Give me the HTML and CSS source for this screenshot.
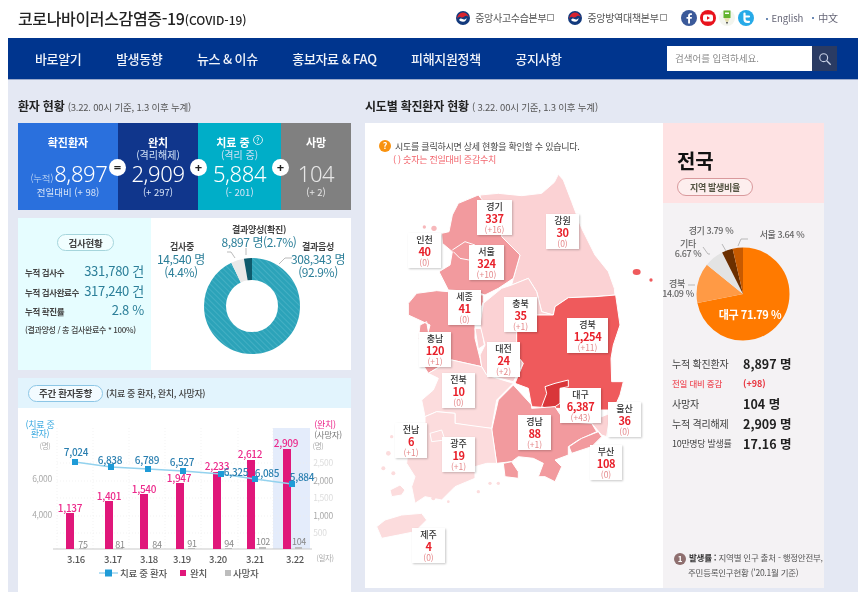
FILE: index.html
```html
<!DOCTYPE html>
<html lang="ko">
<head>
<meta charset="utf-8">
<title>코로나바이러스감염증-19</title>
<link rel="stylesheet" href="styles.css">
</head>
<body>
<header class="top">
  <h1 class="brand">코로나바이러스감염증-19<small>(COVID-19)</small></h1>
  <div class="links">
    <a class="org org-first"><svg class="emblem" viewBox="0 0 16 16"><circle cx="8" cy="8" r="8" fill="#123a7d"/><path d="M1.5 9A6.6 6.6 0 0 1 14.6 7.4C13.5 5.4 11 5 9.6 6.3 8.3 7.6 6.6 8 5.3 7 4 6 2.4 7 1.5 9Z" fill="#d8232f"/><path d="M3.6 10.4C4.2 8.4 6 8.2 7.4 9.2 9 10.2 11.4 9.6 12 7.6 12.4 10 10.6 12.2 8 12.2 6 12.2 4.4 11.6 3.6 10.4Z" fill="#fff"/></svg>중앙사고수습본부<i class="ext"></i></a>
    <a class="org org-second"><svg class="emblem" viewBox="0 0 16 16"><circle cx="8" cy="8" r="8" fill="#123a7d"/><path d="M1.5 9A6.6 6.6 0 0 1 14.6 7.4C13.5 5.4 11 5 9.6 6.3 8.3 7.6 6.6 8 5.3 7 4 6 2.4 7 1.5 9Z" fill="#d8232f"/><path d="M3.6 10.4C4.2 8.4 6 8.2 7.4 9.2 9 10.2 11.4 9.6 12 7.6 12.4 10 10.6 12.2 8 12.2 6 12.2 4.4 11.6 3.6 10.4Z" fill="#fff"/></svg>중앙방역대책본부<i class="ext"></i></a>
    <div class="social">
      <svg class="sns" viewBox="0 0 16 16"><circle cx="8" cy="8" r="8" fill="#3b5a9a"/><path d="M9 13.5V8.8h1.7l.2-1.9H9V5.8c0-.6.2-.9.9-.9h1V3.200h-1.500C8.200 3.200 7.100 4.200 7.100 5.700v1.200H5.500v1.900h1.600v4.700Z" fill="#fff"/></svg>
      <svg class="sns" viewBox="0 0 16 16"><circle cx="8" cy="8" r="8" fill="#e8131d"/><rect x="3" y="4.500" width="10" height="7" rx="2" fill="#fff"/><path d="M7 6.300 10 8 7 9.700Z" fill="#e8131d"/></svg>
      <svg class="sns" viewBox="0 0 16 16"><circle cx="8" cy="8" r="8" fill="#f3f5ee"/><rect x="4.500" y="0.500" width="7" height="7.500" fill="#63b32e"/><rect x="6" y="2.500" width="4" height="1.500" fill="#fff"/><path d="M5 8h6l-2 4H7Z" fill="#e5dfae"/><path d="M7 12h2l-1 2.500Z" fill="#444"/></svg>
      <svg class="sns" viewBox="0 0 16 16"><circle cx="8" cy="8" r="8" fill="#27aae8"/><path d="M6.500 3.500V9c0 2 1 2.800 2.800 2.800H11M6.500 6.500H11" fill="none" stroke="#fff" stroke-width="2.200" stroke-linecap="round"/></svg>
    </div>
    <a class="lang lang-en">English</a>
    <a class="lang lang-cn">中文</a>
  </div>
</header>

<nav class="gnb">
  <ul class="menu">
    <li>바로알기</li>
    <li>발생동향</li>
    <li>뉴스 &amp; 이슈</li>
    <li>홍보자료 &amp; FAQ</li>
    <li>피해지원정책</li>
    <li>공지사항</li>
  </ul>
  <div class="search">
    <span class="search-box">검색어를 입력하세요.</span>
    <span class="search-btn"><svg viewBox="0 0 16 16" width="14" height="14"><circle cx="6.500" cy="6.500" r="4.500" fill="none" stroke="#c9d2e6" stroke-width="1.300"/><path d="M10 10l4.500 4.500" stroke="#c9d2e6" stroke-width="1.500"/></svg></span>
  </div>
</nav>

<main class="page">
  <section class="col-left">
    <h2 class="sec-title">환자 현황 <span>(3.22. 00시 기준, 1.3 이후 누계)</span></h2>

    <div class="stats">
      <div class="cell c-total">
        <b class="t">확진환자</b>
        <div class="num"><small>(누적)</small>8,897</div>
        <div class="chg">전일대비 (+ 98)</div>
      </div>
      <div class="cell c-done">
        <b class="t">완치</b>
        <span class="s">(격리해제)</span>
        <div class="num">2,909</div>
        <div class="chg">(+ 297)</div>
      </div>
      <div class="cell c-care">
        <b class="t">치료 중 <i class="q">?</i></b>
        <span class="s">(격리 중)</span>
        <div class="num">5,884</div>
        <div class="chg">(- 201)</div>
      </div>
      <div class="cell c-dead">
        <b class="t">사망</b>
        <div class="num">104</div>
        <div class="chg">(+ 2)</div>
      </div>
      <span class="op op-1">=</span>
      <span class="op op-2">+</span>
      <span class="op op-3">+</span>
    </div>

    <div class="tests">
      <div class="tests-info">
        <div class="pill pill-test">검사현황</div>
        <dl class="tests-list">
          <div><dt>누적 검사수</dt><dd>331,780 건</dd></div>
          <div><dt>누적 검사완료수</dt><dd>317,240 건</dd></div>
          <div><dt>누적 확진률</dt><dd>2.8 %</dd></div>
        </dl>
        <p class="tests-note">(결과양성 / 총 검사완료수 * 100%)</p>
      </div>
      <svg class="donut" viewBox="151 218 200 152">
        <defs>
          <pattern id="hatch" width="4" height="4" patternUnits="userSpaceOnUse" patternTransform="rotate(45)">
            <rect width="4" height="4" fill="#2ca3b9"/>
            <rect width="1" height="4" fill="#44afc3"/>
          </pattern>
        </defs>
        <g transform="rotate(-90 252 306)" fill="none" stroke-width="22">
          <circle cx="252" cy="306" r="37" pathLength="100" stroke="url(#hatch)" stroke-dasharray="92.9 7.1"/>
          <circle cx="252" cy="306" r="37" pathLength="100" stroke="#e9e9e9" stroke-dasharray="4.4 95.6" stroke-dashoffset="-92.9"/>
          <circle cx="252" cy="306" r="37" pathLength="100" stroke="#0e5a6c" stroke-dasharray="2.7 97.3" stroke-dashoffset="-97.3"/>
        </g>
        <path class="lead" d="M227 252h4l4 6M246 248v7M279 264l6-6h7"/>
        <text class="d-h" x="259" y="233">결과양성(확진)</text>
        <text class="d-v" x="259" y="247">8,897 명(2.7%)</text>
        <text class="d-h" x="182" y="250">검사중</text>
        <text class="d-v" x="181" y="264">14,540 명</text>
        <text class="d-v" x="181" y="277">(4.4%)</text>
        <text class="d-h" x="318" y="250">결과음성</text>
        <text class="d-v" x="318" y="264">308,343 명</text>
        <text class="d-v" x="318" y="277">(92.9%)</text>
      </svg>
    </div>

    <div class="weekly">
      <div class="weekly-head">
        <div class="pill pill-week">주간 환자동향</div>
        <span class="weekly-sub">(치료 중 환자, 완치, 사망자)</span>
      </div>
      <svg class="chart" viewBox="18 408 333 184">
        <rect x="273" y="428" width="37" height="121" fill="#e4ecfb"/>
        <path class="grid" d="M57 428V549M93 428V549M129 428V549M165 428V549M201 428V549M238 428V549M273 428V549"/>
        <path class="grid" d="M57 463H310M57 481H310M57 498H310M57 516H310M57 533H310"/>
        <path d="M53 549H312" stroke="#c9c9c9" stroke-width="1"/>
        <g fill="#e0177a">
          <rect x="66" y="513" width="8" height="36"/>
          <rect x="105" y="501" width="8" height="48"/>
          <rect x="140" y="494" width="8" height="55"/>
          <rect x="176" y="483" width="8" height="66"/>
          <rect x="213" y="472" width="8" height="77"/>
          <rect x="247" y="460" width="8" height="89"/>
          <rect x="283" y="449" width="8" height="100"/>
        </g>
        <g fill="#bdbdbd">
          <rect x="79" y="548" width="7" height="1"/>
          <rect x="116" y="548" width="7" height="1"/>
          <rect x="153" y="548" width="7" height="1"/>
          <rect x="188" y="548" width="7" height="1"/>
          <rect x="225" y="548" width="7" height="1"/>
          <rect x="259" y="547" width="7" height="2"/>
          <rect x="295" y="547" width="7" height="2"/>
        </g>
        <polyline points="75,462 111,467 148,469 183,471 221,474 255,479 292,484" fill="none" stroke="#93d2ee" stroke-width="1.500"/>
        <g fill="#1f9bd7">
          <rect x="72" y="459" width="6" height="6"/>
          <rect x="108" y="464" width="6" height="6"/>
          <rect x="145" y="466" width="6" height="6"/>
          <rect x="180" y="468" width="6" height="6"/>
          <rect x="218" y="471" width="6" height="6"/>
          <rect x="252" y="476" width="6" height="6"/>
          <rect x="289" y="481" width="6" height="6"/>
        </g>
        <g class="v-pink">
          <text x="70" y="512">1,137</text><text x="109" y="500">1,401</text><text x="144" y="493">1,540</text>
          <text x="179" y="482">1,947</text><text x="217" y="470">2,233</text><text x="250" y="458">2,612</text><text x="286" y="447">2,909</text>
        </g>
        <g class="v-blue">
          <text x="76" y="456">7,024</text><text x="110" y="464">6,838</text><text x="147" y="464">6,789</text>
          <text x="182" y="466">6,527</text><text x="236" y="476">6,325</text><text x="267" y="477">6,085</text><text x="302" y="481">5,884</text>
        </g>
        <g class="v-grey">
          <text x="83" y="548">75</text><text x="120" y="548">81</text><text x="157" y="548">84</text>
          <text x="192" y="547">91</text><text x="229" y="547">94</text><text x="263" y="545">102</text><text x="299" y="545">104</text>
        </g>
        <g class="v-date">
          <text x="76" y="563">3.16</text><text x="113" y="563">3.17</text><text x="149" y="563">3.18</text><text x="182" y="563">3.19</text>
          <text x="218" y="563">3.20</text><text x="255" y="563">3.21</text><text x="295" y="563">3.22</text>
        </g>
        <text class="ax-unit" x="325" y="561">(일자)</text>
        <text class="ax-cy" x="40" y="428">(치료 중</text>
        <text class="ax-cy" x="40" y="437">환자)</text>
        <text class="ax-unit" x="45" y="449">(명)</text>
        <text class="ax-l" x="42" y="482">6,000</text>
        <text class="ax-l" x="42" y="518">4,000</text>
        <text class="ax-pk" x="325" y="428">(완치)</text>
        <text class="ax-gr" x="328" y="438">(사망자)</text>
        <text class="ax-unit" x="318" y="449">(명)</text>
        <text class="ax-r" x="323" y="466">2,500</text>
        <text class="ax-l" x="323" y="484">2,000</text>
        <text class="ax-r" x="323" y="501">1,500</text>
        <text class="ax-l" x="323" y="519">1,000</text>
        <text class="ax-r" x="320" y="536">500</text>
        <path d="M99 573H118" stroke="#6fc0e8" stroke-width="1"/>
        <rect x="105" y="569.500" width="7" height="7" fill="#1f9bd7"/>
        <text class="lg" x="120" y="577">치료 중 환자</text>
        <rect x="180" y="570" width="6" height="6" fill="#e0177a"/>
        <text class="lg" x="190" y="577">완치</text>
        <rect x="225" y="570" width="6" height="6" fill="#bdbdbd"/>
        <text class="lg" x="233" y="577">사망자</text>
      </svg>
    </div>
  </section>

  <section class="col-right">
    <h2 class="sec-title">시도별 확진환자 현황 <span>( 3.22. 00시 기준, 1.3 이후 누계)</span></h2>
    <div class="board">
      <div class="map">
        <svg class="map-svg" viewBox="0 -6 894 1395">
          <g stroke="#fff" stroke-width="3" stroke-linejoin="round">
            <path fill="#fbd2d4" d="M345 210L400 205 470 212 530 205 568 172 580 148 595 165 620 230 650 310 690 390 730 440 748 490 750 510 690 515 610 518 570 545 565 570 530 560 515 500 490 460 440 480 445 460 465 390 410 335 410 285 350 240Z"/>
            <path fill="#f29a9e" d="M340 210L360 235 410 290 410 335 465 390 445 460 400 490 360 510 330 500 250 495 222 440 255 420 262 380 232 355 230 325 252 320 262 270 280 235Z"/>
            <path fill="#f29a9e" d="M130 535L155 505 215 497 250 500 355 510 355 530 330 600 330 640 345 700 350 725 260 705 215 730 190 745 165 705 190 680 160 640 165 600 185 590 190 620 195 600 130 570Z"/>
            <path fill="#fbd2d4" d="M330 610L350 610 358 660 340 672Z"/>
            <path fill="#fbd2d4" d="M355 535L410 490 440 480 490 460 515 500 530 560 565 570 515 570 455 620 455 690 475 715 445 770 365 750 350 725 345 690 360 660 345 600Z"/>
            <path fill="#ef5a5c" d="M565 570L570 545 610 518 690 515 752 510 765 600 745 660 738 700 740 770 775 770 765 810 745 855 710 855 575 850 500 845 490 790 450 775 475 715 455 690 455 620 515 570Z"/>
            <path fill="#d9363a" d="M530 845L545 805 540 785 570 775 610 765 610 785 585 790 585 835 570 845 545 850Z"/>
            <path fill="#f29a9e" d="M445 780L500 840 500 850 570 845 600 890 680 895 695 920 640 945 610 965 610 990 570 1005 590 1025 570 1070 540 1055 520 1055 535 1015 505 1000 460 995 440 1010 395 1015 380 915 400 825Z"/>
            <path fill="#f29a9e" d="M415 1015L440 1010 460 1040 460 1060 420 1055Z"/>
            <path fill="#f29a9e" d="M612 965L650 940 700 920 710 935 680 965 620 985Z"/>
            <path fill="#fbd2d4" d="M680 895L710 875 735 865 725 935 710 930Z"/>
            <path fill="#fcdcdd" d="M190 745L260 705 350 725 365 750 445 775 395 825 380 910 330 905 270 895 270 865 215 860 180 875 170 825 205 795 220 760Z"/>
            <path fill="#fcdcdd" d="M180 875L215 860 270 865 270 895 380 910 395 1015 365 1015 330 1025 330 1060 270 1085 230 1125 180 1115 150 1135 140 1085 150 1055 125 1015 130 965 180 935Z"/>
            <path fill="#fcdcdd" d="M195 925L230 915 240 945 200 950Z"/>
            <path fill="#fcdcdd" d="M35 1205L60 1185 110 1170 170 1165 185 1185 150 1220 100 1230 50 1240Z"/>
            <path fill="#fcdcdd" d="M75 1095L105 1080 120 1095 110 1110 80 1115Z"/>
          </g>
          <path d="M262 375L300 350 330 360M265 380L285 400 312 405" fill="none" stroke="#fff" stroke-width="3"/>
          <g fill="#fcdcdd">
            <circle cx="70" cy="985" r="7"/><circle cx="80" cy="935" r="5"/><circle cx="55" cy="1030" r="6"/><circle cx="85" cy="1045" r="6"/><circle cx="375" cy="1075" r="5"/><circle cx="400" cy="1075" r="5"/><circle cx="340" cy="1100" r="5"/><circle cx="205" cy="1120" r="6"/><circle cx="250" cy="1130" r="4"/>
          </g>
          <g fill="#f7b8bb"><circle cx="178" cy="306" r="5"/><circle cx="207" cy="310" r="8"/></g>
          <ellipse cx="815" cy="441" rx="12" ry="9" fill="#ef5a5c"/>
          <circle cx="858" cy="465" r="5" fill="#ef5a5c"/>
        </svg>
        <div class="notice">
          <p class="notice-l1"><i class="notice-q">?</i>시도를 클릭하시면 상세 현황을 확인할 수 있습니다.</p>
          <p class="notice-l2">( ) 숫자는 전일대비 증감수치</p>
        </div>
        <div class="tag tag-gg"><b>경기</b><em>337</em><span>(+16)</span></div>
        <div class="tag tag-gw"><b>강원</b><em>30</em><span>(0)</span></div>
        <div class="tag tag-ic"><b>인천</b><em>40</em><span>(0)</span></div>
        <div class="tag tag-se"><b>서울</b><em>324</em><span>(+10)</span></div>
        <div class="tag tag-sj"><b>세종</b><em>41</em><span>(0)</span></div>
        <div class="tag tag-cb"><b>충북</b><em>35</em><span>(+1)</span></div>
        <div class="tag tag-gb"><b>경북</b><em>1,254</em><span>(+11)</span></div>
        <div class="tag tag-cn"><b>충남</b><em>120</em><span>(+1)</span></div>
        <div class="tag tag-dj"><b>대전</b><em>24</em><span>(+2)</span></div>
        <div class="tag tag-jb"><b>전북</b><em>10</em><span>(0)</span></div>
        <div class="tag tag-dg"><b>대구</b><em>6,387</em><span>(+43)</span></div>
        <div class="tag tag-us"><b>울산</b><em>36</em><span>(0)</span></div>
        <div class="tag tag-jn"><b>전남</b><em>6</em><span>(+1)</span></div>
        <div class="tag tag-gj"><b>광주</b><em>19</em><span>(+1)</span></div>
        <div class="tag tag-gn"><b>경남</b><em>88</em><span>(+1)</span></div>
        <div class="tag tag-bs"><b>부산</b><em>108</em><span>(0)</span></div>
        <div class="tag tag-jj"><b>제주</b><em>4</em><span>(0)</span></div>
      </div>

      <aside class="nation">
        <div class="nation-head">
          <div class="nation-name">전국</div>
          <div class="pill pill-nation">지역 발생비율</div>
        </div>
        <svg class="pie" viewBox="663 203 161 142">
          <g transform="rotate(-90 743 294)" fill="none" stroke-width="46.500">
            <circle cx="743" cy="294" r="23.250" pathLength="100" stroke="#ff7a00" stroke-dasharray="71.79 28.21"/>
            <circle cx="743" cy="294" r="23.250" pathLength="100" stroke="#ff9a45" stroke-dasharray="14.09 85.91" stroke-dashoffset="-71.79"/>
            <circle cx="743" cy="294" r="23.250" pathLength="100" stroke="#e3e3e3" stroke-dasharray="6.67 93.33" stroke-dashoffset="-85.88"/>
            <circle cx="743" cy="294" r="23.250" pathLength="100" stroke="#6b2f00" stroke-dasharray="3.79 96.21" stroke-dashoffset="-92.55"/>
            <circle cx="743" cy="294" r="23.250" pathLength="100" stroke="#c85a00" stroke-dasharray="3.66 96.34" stroke-dashoffset="-96.34"/>
          </g>
          <path class="lead" d="M688 285h7M703 247l5 7 2 0M722 244l4 7M738 246l3-7h7"/>
          <text class="p-l" x="711" y="234">경기 3.79 %</text>
          <text class="p-l" x="782" y="238">서울 3.64 %</text>
          <text class="p-l" x="688" y="247">기타</text>
          <text class="p-l" x="688" y="257">6.67 %</text>
          <text class="p-l" x="677" y="287">경북</text>
          <text class="p-l" x="678" y="297">14.09 %</text>
          <text class="p-big" x="750" y="319">대구 71.79 %</text>
        </svg>
        <dl class="nation-list">
          <div><dt>누적 확진환자</dt><dd>8,897 명</dd></div>
          <div class="is-red"><dt>전일 대비 증감</dt><dd>(+98)</dd></div>
          <div><dt>사망자</dt><dd>104 명</dd></div>
          <div><dt>누적 격리해제</dt><dd>2,909 명</dd></div>
          <div><dt class="is-small">10만명당 발생률</dt><dd>17.16 명</dd></div>
        </dl>
        <p class="foot"><i class="foot-n">1</i><b>발생률 :</b> 지역별 인구 출처 - 행정안전부,<span class="foot-2">주민등록인구현황 ('20.1월 기준)</span></p>
      </aside>
    </div>
  </section>
</main>
</body>
</html>
```

FILE: styles.css
```css
* { box-sizing: border-box; }
html, body { margin: 0; padding: 0; background: #fff; }
body {
  width: 862px;
  height: 603px;
  overflow: hidden;
  font-family: "Noto Sans CJK KR", "Noto Sans", sans-serif;
  color: #333;
  filter: blur(0.35px);
}
h1, h2, p, ul, dl, dd, dt { margin: 0; padding: 0; }
i, em { font-style: normal; }
svg { display: block; }
svg text { font-family: "Noto Sans CJK KR", "Noto Sans", sans-serif; }

/* header */
.top {
  height: 38px;
  display: flex;
  align-items: center;
  padding: 0 24px 3px 18px;
  justify-content: space-between;
}
.brand { font-size: 16px; font-weight: 500; color: #222; letter-spacing: -0.35px; line-height: 1; white-space: nowrap; }
.brand small { font-size: 12px; font-weight: 500; letter-spacing: 0; }
.links { display: flex; align-items: center; font-size: 10px; color: #555; letter-spacing: -0.3px; }
.org { display: flex; align-items: center; white-space: nowrap; }
.org-first { margin-right: 14px; }
.org-second { margin-right: 14px; }
.emblem { width: 14px; height: 14px; margin-right: 5px; }
.ext { display: inline-block; width: 7px; height: 7px; border: 1px solid #999; margin-left: 1px; }
.social { display: flex; gap: 3px; align-items: center; margin-right: 12px; }
.sns { width: 16px; height: 16px; }
.lang { font-size: 9.5px; color: #667; position: relative; padding-left: 6px; letter-spacing: -0.1px; }
.lang::before { content: ""; position: absolute; left: 0; top: 7px; width: 2px; height: 2px; background: #6d8ab5; }
.lang-en { margin-right: 9px; }
.lang-cn { font-size: 10px; }

/* nav */
.gnb {
  margin: 0 4px 0 8px;
  height: 42px;
  background: #00358e;
  border-bottom: 1px solid #9aa9cc;
  display: flex;
  align-items: center;
  justify-content: space-between;
  padding: 0 21px 0 27px;
}
.menu { list-style: none; display: flex; gap: 34.500px; font-size: 13px; font-weight: 500; color: #f1f4fa; letter-spacing: -0.35px; white-space: nowrap; word-spacing: -0.5px; }
.search { display: flex; height: 25px; }
.search-box { width: 145px; background: #fff; font-size: 9.5px; color: #8a8a8a; line-height: 25px; padding-left: 8px; }
.search-btn { width: 25px; background: #2a3b63; display: flex; align-items: center; justify-content: center; }

/* main */
.page {
  margin: 0 4px 0 8px;
  height: 512px;
  background: #e4e8f3;
  padding: 0 0 0 10px;
  display: grid;
  grid-template-columns: 333px 459px;
  column-gap: 14px;
  overflow: hidden;
}
.sec-title { height: 43px; padding-top: 17px; font-size: 12px; font-weight: 700; color: #222; line-height: 18px; letter-spacing: -0.2px; white-space: nowrap; }
.sec-title span { font-size: 9.5px; font-weight: 400; color: #555; letter-spacing: -0.2px; }

/* stats */
.stats { position: relative; display: grid; grid-template-columns: 100px 80px 83px 70px; height: 87px; color: #fff; }
.cell { display: grid; grid-template-rows: 14px 11px 26px 13px; padding-top: 12px; justify-items: center; text-align: center; white-space: nowrap; }
.c-total { background: #2a70dd; }
.c-done { background: #10368c; }
.c-care { background: #00aec8; }
.c-dead { background: #808080; }
.t { grid-row: 1; font-size: 11px; font-weight: 700; line-height: 14px; }
.s { grid-row: 2; font-size: 10px; line-height: 11px; color: #cfe0f5; }
.num { grid-row: 3; font-family: "Noto Sans", sans-serif; font-weight: 300; font-size: 22px; line-height: 26px; letter-spacing: -0.4px; }
.num small { font-family: "Noto Sans CJK KR", sans-serif; font-size: 9.5px; letter-spacing: -0.2px; color: #cfe0f5; margin-right: 1px; }
.c-total .num { padding-left: 2px; }
.chg { grid-row: 4; font-size: 9.5px; line-height: 13px; color: #d7e4f7; }
.c-dead .num, .c-dead .chg { color: #e6e6e6; }
.q { display: inline-block; position: relative; top: -4px; width: 10px; height: 10px; border: 1px solid #cfeef4; border-radius: 50%; font-size: 7px; line-height: 8px; font-weight: 400; text-align: center; }
.op { position: absolute; top: 36px; width: 17px; height: 17px; border-radius: 50%; background: #fff; color: #222; font-size: 13px; line-height: 16px; font-weight: 700; text-align: center; font-family: "Noto Sans", sans-serif; }
.op-1 { left: 91px; }
.op-2 { left: 172px; }
.op-3 { left: 254px; }

/* pills */
.pill { display: flex; align-items: center; justify-content: center; border-radius: 10px; white-space: nowrap; font-weight: 700; color: #444; letter-spacing: -0.3px; }

/* tests */
.tests { margin-top: 8px; height: 152px; display: flex; background: #fff; }
.tests-info { width: 133px; background: #e6fdff; padding: 16px 7px 0 7px; }
.pill-test { width: 57px; height: 17px; margin: 0 0 0 32px; border: 1px solid #a5d5dc; background: #f1feff; font-size: 9.5px; }
.tests-list { margin-top: 10px; }
.tests-list div { display: flex; justify-content: space-between; align-items: baseline; height: 19.500px; white-space: nowrap; }
.tests-list dt { font-size: 8.500px; font-weight: 700; color: #444; letter-spacing: -0.4px; }
.tests-list dd { font-size: 13px; color: #2c7f99; letter-spacing: -0.3px; }
.tests-note { margin-top: 4px; font-size: 8px; color: #444; font-weight: 500; letter-spacing: -0.35px; white-space: nowrap; }
.donut { width: 200px; height: 152px; }
.lead { fill: none; stroke: #aaa; stroke-width: 0.800; }
.d-h { font-size: 9px; font-weight: 700; fill: #444; text-anchor: middle; letter-spacing: -0.3px; }
.d-v { font-size: 12px; fill: #2c7f99; text-anchor: middle; letter-spacing: -0.4px; }

/* weekly */
.weekly { margin-top: 8px; background: #fff; height: 214px; }
.weekly-head { height: 30px; background: #e2f4fd; display: flex; align-items: center; padding: 0 0 0 10px; gap: 3px; }
.pill-week { width: 75px; height: 17px; border: 1px solid #8cc6e6; background: #f3fbff; font-size: 9.500px; }
.weekly-sub { font-size: 9px; font-weight: 500; color: #444; letter-spacing: -0.3px; white-space: nowrap; }
.chart { width: 333px; height: 184px; }
.grid { fill: none; stroke: #eee; stroke-width: 0.700; stroke-dasharray: 1 2; }
.chart text { text-anchor: middle; letter-spacing: -0.3px; }
.v-blue text { font-size: 10px; fill: #2a7fb0; font-weight: 500; }
.v-pink text { font-size: 10px; fill: #ec2a8b; font-weight: 500; }
.v-grey text { font-size: 9px; fill: #888; }
.v-date text { font-size: 9.500px; fill: #555; font-weight: 500; }
.ax-unit { font-size: 7.500px; fill: #aaa; }
.ax-cy { font-size: 9px; fill: #3aa9e0; }
.ax-pk { font-size: 9px; fill: #ec2a8b; }
.ax-gr { font-size: 8.500px; fill: #777; }
.ax-l { font-size: 8.500px; fill: #aaa; }
.ax-r { font-size: 8.500px; fill: #ddd; }
.chart .lg { font-size: 9.500px; fill: #555; font-weight: 500; text-anchor: start; }

/* board */
.board { display: flex; height: 465px; background: #fff; }
.map { position: relative; width: 298px; height: 465px; }
.map-svg { position: absolute; left: 0; top: 0; width: 298px; height: 465px; }
.notice { position: absolute; left: 14px; top: 16px; font-size: 9px; letter-spacing: -0.25px; white-space: nowrap; }
.notice-l1 { color: #444; display: flex; align-items: center; height: 14px; }
.notice-l2 { color: #f2646c; padding-left: 14px; line-height: 14px; }
.notice-q { width: 12px; height: 12px; border-radius: 50%; background: #f9920f; color: #fff; text-align: center; font-size: 9px; line-height: 12px; font-weight: 700; margin-right: 4px; }
.tag {
  position: absolute;
  width: 33px;
  height: 35px;
  background: #fff;
  box-shadow: 1px 1px 2px rgba(0,0,0,.22);
  display: flex;
  flex-direction: column;
  align-items: center;
  justify-content: center;
  white-space: nowrap;
  text-align: center;
}
.tag b { font-size: 9px; font-weight: 500; line-height: 11px; color: #333; }
.tag em { font-size: 11px; font-weight: 700; line-height: 12px; color: #e8212b; letter-spacing: -0.4px; }
.tag span { font-size: 8.500px; line-height: 11px; color: #e58a8c; }
.tag-gg { left: 112px; top: 77px; width: 35px; }
.tag-gw { left: 181px; top: 91px; }
.tag-ic { left: 43px; top: 110px; }
.tag-se { left: 104px; top: 122px; width: 35px; }
.tag-sj { left: 83px; top: 167px; }
.tag-cb { left: 139px; top: 174px; }
.tag-gb { left: 202px; top: 195px; width: 41px; }
.tag-cn { left: 54px; top: 209px; width: 32px; }
.tag-dj { left: 122px; top: 219px; }
.tag-jb { left: 77px; top: 250px; }
.tag-dg { left: 195px; top: 265px; width: 41px; }
.tag-us { left: 243px; top: 279px; }
.tag-jn { left: 30px; top: 300px; width: 32px; }
.tag-gj { left: 77px; top: 314px; }
.tag-gn { left: 153px; top: 292px; }
.tag-bs { left: 225px; top: 322px; width: 32px; }
.tag-jj { left: 47px; top: 405px; }

/* nation */
.nation { width: 161px; background: #f4f2f4; display: flex; flex-direction: column; }
.nation-head { height: 80px; background: #fee2e3; padding: 25px 0 0 14px; }
.nation-name { font-size: 20px; font-weight: 700; line-height: 26px; color: #111; letter-spacing: -0.2px; }
.pill-nation { width: 76px; height: 18px; margin-top: 4px; border: 1px solid #d9999c; background: #fdeeee; font-size: 9px; color: #554; }
.pie { width: 161px; height: 142px; flex: none; }
.pie text { letter-spacing: -0.4px; }
.p-l { font-size: 9px; fill: #666; font-weight: 500; text-anchor: middle; }
.p-big { font-size: 11px; fill: #fff; font-weight: 700; text-anchor: middle; }
.nation-list { padding: 8px 0 0 9px; }
.nation-list div { display: grid; grid-template-columns: 71px auto; align-items: center; height: 20px; white-space: nowrap; }
.nation-list dt { font-size: 10px; color: #444; letter-spacing: -0.2px; }
.nation-list dt.is-small { font-size: 9px; letter-spacing: -0.3px; }
.nation-list dd { font-size: 12.500px; font-weight: 700; color: #222; }
.nation-list .is-red dd { font-size: 9px; color: #e8343e; }
.nation-list .is-red dt { font-size: 8.500px; color: #ee5560; font-weight: 500; }
.foot { margin-top: auto; padding: 0 0 9px 11px; font-size: 8.500px; line-height: 14px; color: #555; letter-spacing: -0.25px; white-space: nowrap; }
.foot b { color: #333; }
.foot-2 { display: block; padding-left: 14px; }
.foot-n { display: inline-block; width: 12px; height: 12px; border-radius: 50%; background: #8e6f6f; color: #fff; font-size: 8px; line-height: 12px; text-align: center; margin: 0 3px 0 0; font-weight: 700; vertical-align: -1px; }
```
